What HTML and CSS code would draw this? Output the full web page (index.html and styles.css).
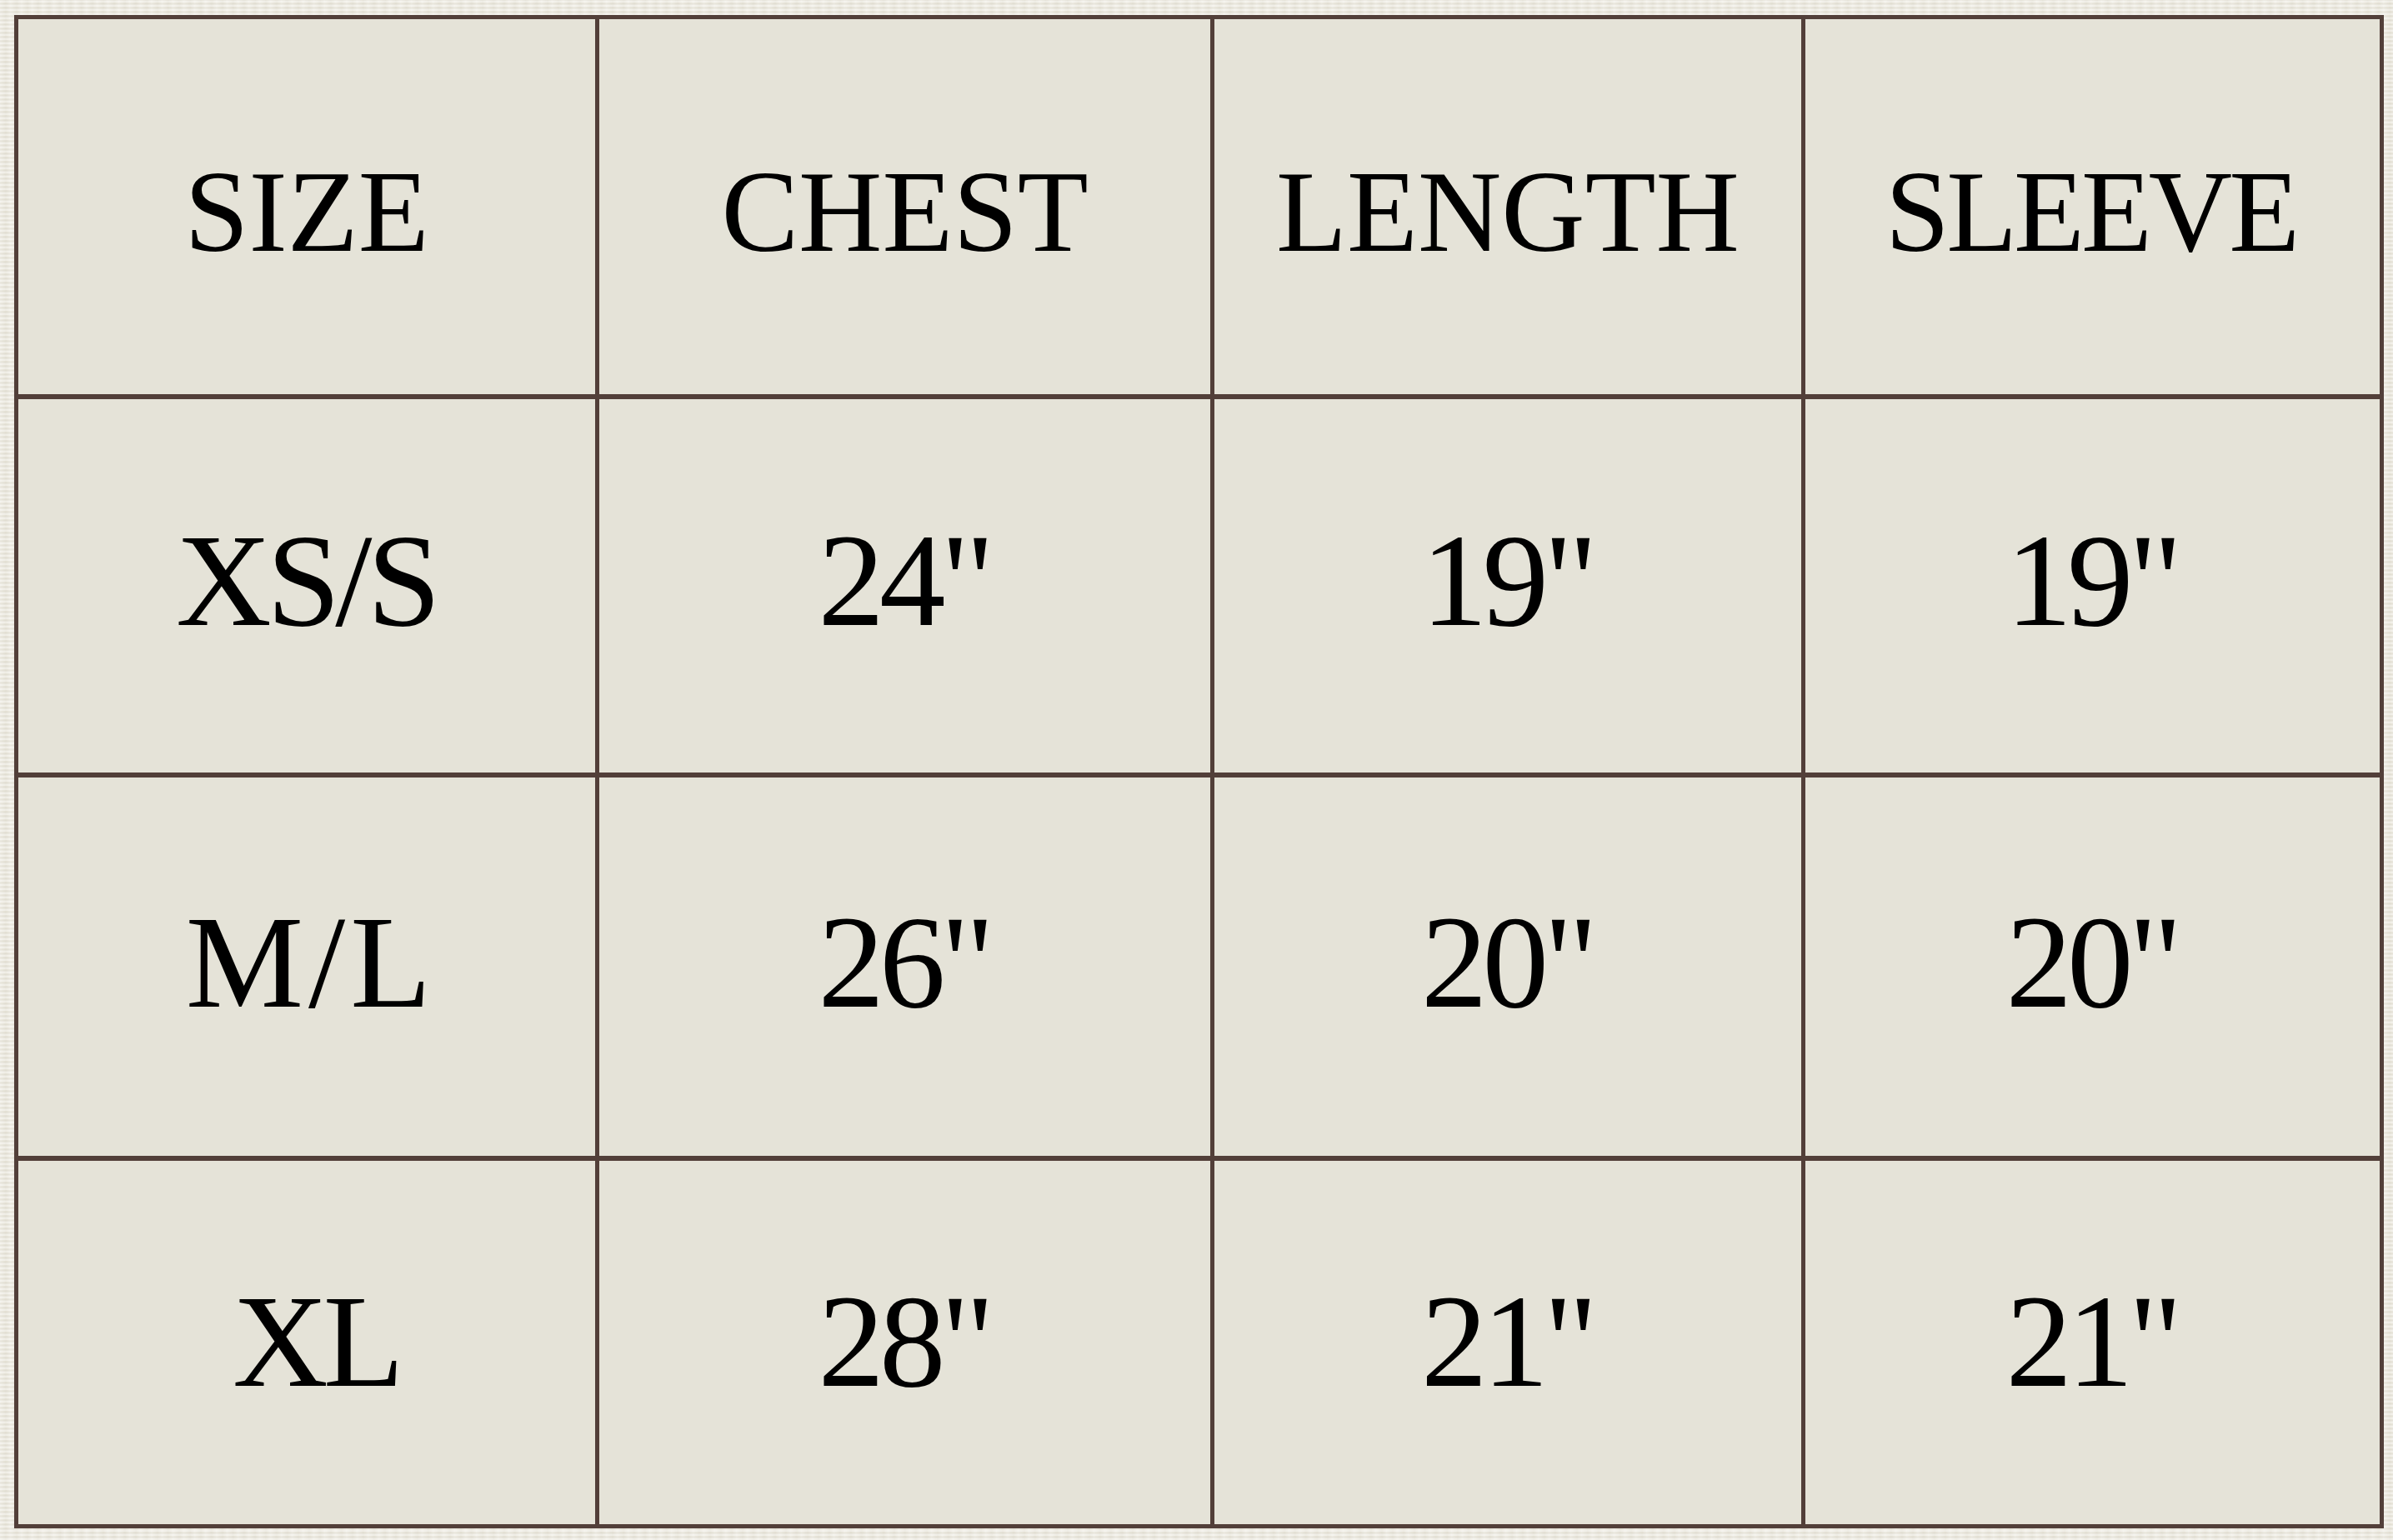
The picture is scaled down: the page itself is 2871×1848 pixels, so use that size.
FILE: index.html
```html
<!DOCTYPE html>
<html lang="en">
<head>
<meta charset="utf-8">
<title>Size Chart</title>
<link rel="stylesheet" href="styles.css">
</head>
<body>
<main class="page">
  <div class="chart">
    <div class="cell head">SIZE</div>
    <div class="cell head">CHEST</div>
    <div class="cell head">LENGTH</div>
    <div class="cell head tight">SLEEVE</div>

    <div class="cell body r2">XS/S</div>
    <div class="cell body r2">24"</div>
    <div class="cell body r2">19"</div>
    <div class="cell body r2">19"</div>

    <div class="cell body r3 wide">M/L</div>
    <div class="cell body r3">26"</div>
    <div class="cell body r3">20"</div>
    <div class="cell body r3">20"</div>

    <div class="cell body r4 shift">XL</div>
    <div class="cell body r4">28"</div>
    <div class="cell body r4">21"</div>
    <div class="cell body r4">21"</div>
  </div>
</main>
</body>
</html>
```

FILE: styles.css
```css
html, body {
  margin: 0;
  padding: 0;
}

body {
  width: 2871px;
  height: 1848px;
  overflow: hidden;
  background-color: #ebe8dd;
  background-image:
    repeating-linear-gradient(0deg, rgba(255,255,255,0.35) 0px, rgba(255,255,255,0.35) 2px, rgba(200,196,182,0.25) 3px, rgba(255,255,255,0) 5px),
    repeating-linear-gradient(90deg, rgba(255,255,255,0.25) 0px, rgba(210,206,192,0.2) 7px, rgba(255,255,255,0.3) 13px);
  font-family: "Liberation Serif", "Times New Roman", serif;
  color: #000;
}

.page {
  padding: 18px 0 0 17px;
}

.chart {
  display: grid;
  grid-template-columns: 692px 733px 704px 689px;
  grid-template-rows: 450px 448px 454px 436px;
  column-gap: 5px;
  row-gap: 6px;
  padding: 5px;
  width: max-content;
  background: #523f39;
}

.cell {
  background: #e5e3d8;
  display: flex;
  align-items: center;
  justify-content: center;
  line-height: 1;
  white-space: nowrap;
}

.head {
  font-size: 139px;
  padding-top: 12px;
}

.tight {
  letter-spacing: -4px;
  padding-right: 4px;
}

.body {
  font-size: 159px;
  letter-spacing: -6px;
  padding-right: 2px;
}

.body.wide {
  letter-spacing: 6px;
  padding-right: 0;
  padding-left: 10px;
}

.body.shift {
  padding-right: 0;
  padding-left: 22px;
}

.r2 {
  padding-bottom: 14px;
}

.r3 {
  padding-bottom: 12px;
}

.r4 {
  padding-bottom: 4px;
}
```
